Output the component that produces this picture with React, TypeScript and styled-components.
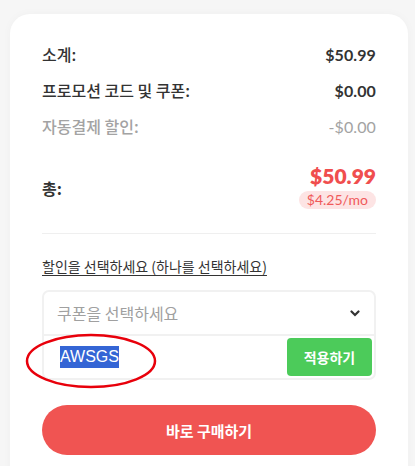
import React, { FC } from 'react';
import styled, { createGlobalStyle } from 'styled-components';

const GlobalStyle = createGlobalStyle({
  'html, body': {
    margin: 0,
    padding: 0,
    background: '#f6f6f6',
  },
  body: {
    fontFamily: '"Noto Sans CJK KR", "Noto Sans", sans-serif',
  },
});

const Page = styled.div({
  padding: '14px 7px 0 10px',
  height: '466px',
  boxSizing: 'border-box',
  overflow: 'hidden',
});

const Card = styled.div({
  background: '#ffffff',
  borderRadius: '20px 20px 0 0',
  padding: '22px 32px 40px',
  boxShadow: '0 0 10px rgba(0,0,0,0.03)',
  minHeight: '500px',
  boxSizing: 'border-box',
});

const Row = styled.div<{ $muted?: boolean }>(({ $muted }) => ({
  display: 'flex',
  justifyContent: 'space-between',
  alignItems: 'center',
  height: '36px',
  fontSize: '16px',
  color: $muted ? '#a3a3a3' : '#333333',
}));

const Label = styled.span({
  fontWeight: 500,
});

const Amount = styled.span<{ $muted?: boolean }>(({ $muted }) => ({
  fontFamily: '"Lato", "Noto Sans", sans-serif',
  fontWeight: $muted ? 400 : 700,
  fontSize: '16px',
  letterSpacing: '0.1px',
}));

const TotalRow = styled.div({
  display: 'flex',
  justifyContent: 'space-between',
  alignItems: 'center',
  marginTop: '19px',
  paddingBottom: '24px',
  borderBottom: '1px solid #efefef',
  fontSize: '16px',
  color: '#333333',
});

const TotalLabel = styled.span({
  fontWeight: 700,
  paddingTop: '4px',
});

const TotalValues = styled.div({
  display: 'flex',
  flexDirection: 'column',
  alignItems: 'flex-end',
  gap: '2px',
});

const TotalAmount = styled.span({
  fontFamily: '"Lato", "Noto Sans", sans-serif',
  fontWeight: 800,
  fontSize: '21px',
  lineHeight: '26px',
  color: '#f04e4e',
});

const MonthlyBadge = styled.span({
  fontFamily: '"Lato", "Noto Sans", sans-serif',
  fontSize: '14px',
  lineHeight: '18px',
  padding: '0 8px',
  borderRadius: '9px',
  background: '#fde4e4',
  color: '#f05a5a',
});

const DiscountTitle = styled.div({
  marginTop: '22px',
  fontSize: '14px',
  color: '#333333',
  textDecoration: 'underline',
  textUnderlineOffset: '3px',
});

const CouponBox = styled.div({
  position: 'relative',
  marginTop: '14px',
  border: '2px solid #f1f1f1',
  borderRadius: '7px',
});

const SelectRow = styled.div({
  display: 'flex',
  alignItems: 'center',
  justifyContent: 'space-between',
  height: '42px',
  padding: '0 14px 0 13px',
  borderBottom: '2px solid #f1f1f1',
  fontSize: '16px',
  color: '#a0a0a0',
});

const InputRow = styled.div({
  display: 'flex',
  alignItems: 'center',
  justifyContent: 'space-between',
  height: '42px',
  padding: '0 2px 0 16px',
});

const CodeText = styled.span({
  fontFamily: '"Liberation Sans", Arial, sans-serif',
  fontSize: '16px',
  lineHeight: '22px',
  background: '#3465d5',
  color: '#ffffff',
});

const ApplyButton = styled.button({
  width: '85px',
  height: '38px',
  border: 'none',
  borderRadius: '4px',
  background: '#4ccb5a',
  color: '#ffffff',
  fontFamily: '"Noto Sans CJK KR", sans-serif',
  fontSize: '14px',
  fontWeight: 700,
});

const Annotation = styled.svg({
  position: 'absolute',
  left: '-20px',
  top: '40px',
  pointerEvents: 'none',
});

const BuyButton = styled.button({
  display: 'block',
  width: '100%',
  height: '50px',
  marginTop: '25px',
  border: 'none',
  borderRadius: '25px',
  background: '#f05452',
  color: '#ffffff',
  fontFamily: '"Noto Sans CJK KR", sans-serif',
  fontSize: '15px',
  fontWeight: 700,
});

const Chevron: FC = () => (
  <svg width="10" height="8" viewBox="0 0 10 8">
    <path d="M1.5 2.5 L5 6 L8.5 2.5" fill="none" stroke="#333" strokeWidth="2.2" strokeLinecap="round" />
  </svg>
);

const App: FC = () => (
  <Page>
    <GlobalStyle />
    <Card>
      <Row>
        <Label>소계:</Label>
        <Amount>$50.99</Amount>
      </Row>
      <Row>
        <Label>프로모션 코드 및 쿠폰:</Label>
        <Amount>$0.00</Amount>
      </Row>
      <Row $muted>
        <Label>자동결제 할인:</Label>
        <Amount $muted>-$0.00</Amount>
      </Row>
      <TotalRow>
        <TotalLabel>총:</TotalLabel>
        <TotalValues>
          <TotalAmount>$50.99</TotalAmount>
          <MonthlyBadge>$4.25/mo</MonthlyBadge>
        </TotalValues>
      </TotalRow>
      <DiscountTitle>할인을 선택하세요 (하나를 선택하세요)</DiscountTitle>
      <CouponBox>
        <SelectRow>
          <span>쿠폰을 선택하세요</span>
          <Chevron />
        </SelectRow>
        <InputRow>
          <CodeText>AWSGS</CodeText>
          <ApplyButton>적용하기</ApplyButton>
        </InputRow>
        <Annotation width="134" height="58" viewBox="0 0 134 58">
          <ellipse cx="67" cy="29" rx="64" ry="26" fill="none" stroke="#e8000b" strokeWidth="2.5" />
        </Annotation>
      </CouponBox>
      <BuyButton>바로 구매하기</BuyButton>
    </Card>
  </Page>
);

export default App;
